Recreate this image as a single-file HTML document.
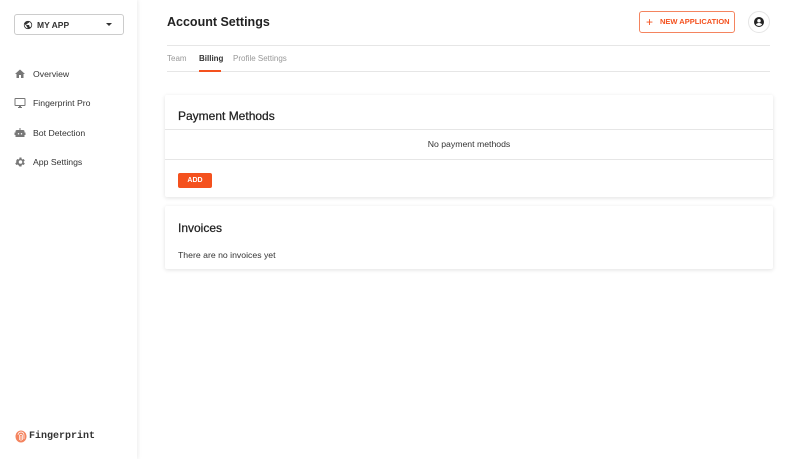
<!DOCTYPE html>
<html><head><style>
*{margin:0;padding:0;box-sizing:border-box}
body{width:800px;height:459px;background:#fff;font-family:"Liberation Sans",Arial,sans-serif;position:relative;overflow:hidden;color:#222}
.sb{position:absolute;left:0;top:0;width:137px;height:459px;background:#fff;box-shadow:1px 0 4px rgba(0,0,0,.08)}
.sel{position:absolute;left:14px;top:14px;width:110px;height:21px;border:1px solid #ccc;border-radius:3px;font-size:8.5px;font-weight:bold;color:#333}
.nav{position:absolute;left:33px;font-size:8.7px;color:#333;white-space:nowrap}
.ic{position:absolute;left:14px}
.a{position:absolute;white-space:nowrap}
.card{position:absolute;left:165px;width:608px;background:#fff;box-shadow:0 1px 4px rgba(0,0,0,.12);border-radius:2px}
</style></head><body>
<div class="sb">
<div class="sel"><svg class="a" style="left:8px;top:5px" width="10" height="10" viewBox="0 0 24 24"><path fill="#333" d="M12 2a10 10 0 100 20 10 10 0 000-20zm-1 17.9A8 8 0 014.2 10L9 14.8v1a2 2 0 002 2zm6.9-2.5A2 2 0 0016 16h-1v-3a1 1 0 00-1-1H8v-2h2a1 1 0 001-1V7h2a2 2 0 002-2v-.4a8 8 0 012.9 12.8z"/></svg><span class="a" style="left:22px;top:5px">MY APP</span><span class="a" style="left:91px;top:8px;border:3px solid transparent;border-top:3.5px solid #333"></span></div>
<svg class="ic" style="top:68px" width="12" height="12" viewBox="0 0 24 24"><path fill="#777" d="M10 20v-6h4v6h5v-8h3L12 3 2 12h3v8z"/></svg><div class="nav" style="top:69px">Overview</div>
<svg class="ic" style="top:97px" width="12" height="12" viewBox="0 0 24 24"><path fill="#777" d="M21 2H3a2 2 0 00-2 2v12a2 2 0 002 2h7v2H8v2h8v-2h-2v-2h7a2 2 0 002-2V4a2 2 0 00-2-2zm0 14H3V4h18z"/></svg><div class="nav" style="top:98px">Fingerprint Pro</div>
<svg class="ic" style="top:127px" width="12" height="12" viewBox="0 0 24 24"><path fill="#777" d="M11 2h2v4h5a3 3 0 013 3v2h2v5h-2v4H3v-4H1v-5h2V9a3 3 0 013-3h5zM9 12a1.5 1.5 0 100 3 1.5 1.5 0 000-3zm6 0a1.5 1.5 0 100 3 1.5 1.5 0 000-3z"/></svg><div class="nav" style="top:128px">Bot Detection</div>
<svg class="ic" style="top:156px" width="12" height="12" viewBox="0 0 24 24"><path fill="#777" d="M19.4 13a7.5 7.5 0 000-2l2.1-1.6-2-3.5-2.5 1a7 7 0 00-1.7-1L15 3h-4l-.4 2.9a7 7 0 00-1.7 1l-2.5-1-2 3.5L4.6 11a7.5 7.5 0 000 2l-2.1 1.6 2 3.5 2.5-1a7 7 0 001.7 1L11 21h4l.4-2.9a7 7 0 001.7-1l2.5 1 2-3.5zM13 15.5a3.5 3.5 0 110-7 3.5 3.5 0 010 7z"/></svg><div class="nav" style="top:157px">App Settings</div>
<svg class="a" style="left:15px;top:430px" width="12" height="13" viewBox="0 0 12 13"><ellipse cx="6" cy="6.5" rx="5.5" ry="6" fill="#f4845f"/><path d="M3 5a3 3 0 016 0v4M4.5 10V6a1.5 1.5 0 013 0v4M6 6v5" stroke="#fff" stroke-width=".7" fill="none"/></svg>
<div class="a" style="left:29px;top:431px;font-family:'Liberation Mono',monospace;font-size:10px;font-weight:bold;color:#333">Fingerprint</div>
</div>
<div class="a" style="left:167px;top:15px;font-size:12.5px;font-weight:bold;color:#222">Account Settings</div>
<div class="a" style="left:639px;top:11px;width:96px;height:22px;border:1px solid #f4845f;border-radius:3px;color:#f4511e;font-size:7.5px;font-weight:bold;line-height:20px;padding-left:20px">NEW APPLICATION</div>
<div class="a" style="left:646px;top:16px;font-size:12px;color:#f4511e;line-height:12px">+</div>
<div class="a" style="left:748px;top:11px;width:22px;height:22px;border:1px solid #e5e5e5;border-radius:50%"></div>
<svg class="a" style="left:753px;top:16px" width="12" height="12" viewBox="0 0 24 24"><path fill="#222" d="M12 2a10 10 0 100 20 10 10 0 000-20zm0 4a3.5 3.5 0 110 7 3.5 3.5 0 010-7zm0 14a8 8 0 01-6-2.8c0-2 4-3.1 6-3.1s6 1.1 6 3.1A8 8 0 0112 20z"/></svg>
<div class="a" style="left:167px;top:45px;width:603px;height:1px;background:#e6e6e6"></div>
<div class="a" style="left:167px;top:54px;font-size:8px;color:#999">Team</div>
<div class="a" style="left:199px;top:54px;font-size:8px;font-weight:bold;color:#333">Billing</div>
<div class="a" style="left:233px;top:54px;font-size:8px;color:#999">Profile Settings</div>
<div class="a" style="left:167px;top:71px;width:603px;height:1px;background:#e6e6e6"></div>
<div class="a" style="left:199px;top:70px;width:22px;height:2px;background:#f4511e"></div>
<div class="card" style="top:95px;height:102px">
<div class="a" style="left:13px;top:14px;font-size:12px;color:#222;-webkit-text-stroke:.25px #222">Payment Methods</div>
<div class="a" style="left:0;top:34px;width:100%;height:1px;background:#e6e6e6"></div>
<div class="a" style="left:0;top:44px;width:100%;text-align:center;font-size:8.7px;color:#333">No payment methods</div>
<div class="a" style="left:0;top:64px;width:100%;height:1px;background:#e6e6e6"></div>
<div class="a" style="left:13px;top:78px;width:34px;height:15px;background:#f4511e;border-radius:2px;color:#fff;font-size:7px;font-weight:bold;text-align:center;line-height:15px">ADD</div>
</div>
<div class="card" style="top:206px;height:63px">
<div class="a" style="left:13px;top:15px;font-size:12px;color:#222;-webkit-text-stroke:.25px #222">Invoices</div>
<div class="a" style="left:13px;top:44px;font-size:8.7px;color:#333">There are no invoices yet</div>
</div>
</body></html>
